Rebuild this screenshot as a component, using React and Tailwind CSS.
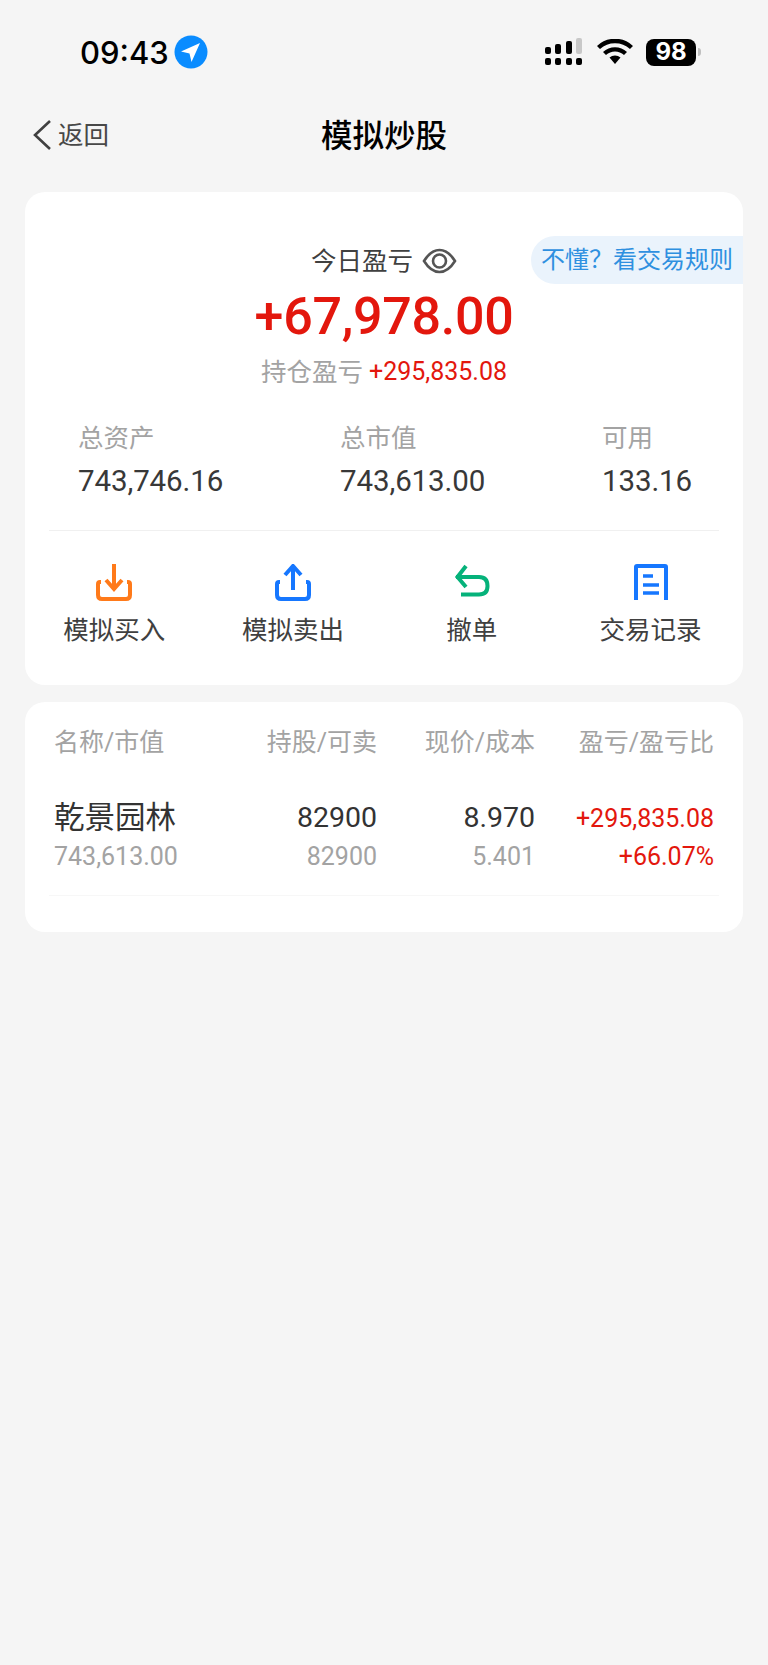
const cjk = '"Roboto","Noto Sans CJK SC",sans-serif';

function StatusBar() {
  return (
    <div className="relative flex h-[90px] items-center justify-between pt-[14px] pl-[80px] pr-[67px]">
      <div className="flex items-center gap-[5px]">
        <span className="text-[31px] leading-none font-medium text-black" style={{ fontFamily: 'Inter,sans-serif' }}>09:43</span>
        <svg width="34" height="34" viewBox="0 0 34 34">
          <circle cx="17" cy="17" r="16.5" fill="#0a8cff" />
          <path d="M26 8 L7 16.5 L15.5 18.5 L17.5 27 Z" fill="#fff" />
        </svg>
      </div>
      <div className="flex items-center">
        <svg width="42" height="28" viewBox="0 0 42 28" className="mr-[11px]">
          <rect x="1" y="9" width="6" height="7" rx="2" fill="#000" />
          <rect x="11" y="6" width="6" height="10" rx="2" fill="#000" />
          <rect x="22" y="3" width="6" height="13" rx="2" fill="#000" />
          <rect x="32" y="0" width="6" height="16" rx="2" fill="#c8c8c8" />
          <rect x="1" y="20" width="6" height="7" rx="2" fill="#000" />
          <rect x="11" y="20" width="6" height="7" rx="2" fill="#000" />
          <rect x="22" y="20" width="6" height="7" rx="2" fill="#000" />
          <rect x="32" y="20" width="6" height="7" rx="2" fill="#000" />
        </svg>
        <svg width="36" height="26" viewBox="0 0 36 26" className="mr-[13px]">
          <path d="M18 25 L12.5 18.5 A8.5 8.5 0 0 1 23.5 18.5 Z" fill="#000" />
          <path d="M7.5 14.5 A15.5 15.500 0 0 1 28.500 14.500" fill="none" stroke="#000" strokeWidth="4.4" />
          <path d="M1.500 8.500 A24 24 0 0 1 34.500 8.500" fill="none" stroke="#000" strokeWidth="4.4" />
        </svg>
        <div className="flex h-[27px] w-[50px] items-center justify-center rounded-[8px] bg-black text-[24px] leading-none font-bold text-white" style={{ fontFamily: 'Inter,sans-serif' }}>98</div>
        <div className="ml-[2px] h-[8px] w-[3px] rounded-r-full bg-[#c0c0c0]" />
      </div>
    </div>
  );
}

function NavBar() {
  return (
    <div className="relative flex h-[92px] items-center justify-center">
      <div className="absolute left-[32px] top-[29px] flex items-center">
        <svg width="20" height="32" viewBox="0 0 20 32">
          <path d="M18 2 L3 16 L18 30" fill="none" stroke="#404040" strokeWidth="2.6" />
        </svg>
        <span className="ml-[6px] mt-[1px] text-[25.500px] leading-none text-[#484848]">返回</span>
      </div>
      <span className="mt-[2px] text-[31.500px] leading-none font-medium text-black">模拟炒股</span>
    </div>
  );
}

function EyeIcon() {
  return (
    <svg width="35" height="26" viewBox="0 0 35 26" className="ml-[9px]">
      <path d="M2 13 C7 5 12 2 17.500 2 C23 2 28 5 33 13 C28 21 23 24 17.500 24 C12 24 7 21 2 13 Z" fill="none" stroke="#555" strokeWidth="2.600" />
      <circle cx="17.500" cy="13" r="6.500" fill="none" stroke="#555" strokeWidth="2.600" />
    </svg>
  );
}

function BuyIcon() {
  return (
    <svg width="36" height="37" viewBox="0 0 36 37">
      <path d="M5 18 H4 Q2 18 2 20 V31 Q2 35 6 35 H30 Q34 35 34 31 V20 Q34 18 32 18 H31" fill="none" stroke="#ff7a1a" strokeWidth="4" />
      <path d="M18 0 V24" stroke="#ff7a1a" strokeWidth="4" fill="none" />
      <path d="M10 16 L18 25 L26 16" stroke="#ff7a1a" strokeWidth="4" fill="none" />
    </svg>
  );
}

function SellIcon() {
  return (
    <svg width="36" height="37" viewBox="0 0 36 37">
      <path d="M5 18 H4 Q2 18 2 20 V31 Q2 35 6 35 H30 Q34 35 34 31 V20 Q34 18 32 18 H31" fill="none" stroke="#1677ff" strokeWidth="4" />
      <path d="M18 4 V26" stroke="#1677ff" strokeWidth="4" fill="none" />
      <path d="M10 11 L18 2 L26 11" stroke="#1677ff" strokeWidth="4" fill="none" />
    </svg>
  );
}

function RevokeIcon() {
  return (
    <svg width="36" height="37" viewBox="0 0 36 37">
      <path d="M2 13 H25 Q33.500 13 33.500 22 Q33.500 30.500 25 30.500 H7" fill="none" stroke="#05b27a" strokeWidth="4" />
      <path d="M12 2 L3.500 13 L12 23" fill="none" stroke="#05b27a" strokeWidth="4" />
    </svg>
  );
}

function RecordIcon() {
  return (
    <svg width="36" height="37" viewBox="0 0 36 37">
      <path d="M3 36 V3 Q3 2 4 2 H32 Q33 2 33 3 V36" fill="none" stroke="#1677ff" strokeWidth="4" />
      <path d="M10 12 H20 M10 21 H26 M10 29 H26" stroke="#1677ff" strokeWidth="3.500" fill="none" />
    </svg>
  );
}

function Stat({ label, value }) {
  return (
    <div>
      <div className="text-[25.500px] leading-[30px] text-[#a3a3a3]">{label}</div>
      <div className="mt-[13px] text-[29.500px] leading-[30px] tracking-[-0.1px] text-[#383838]">{value}</div>
    </div>
  );
}

function Action({ icon, label }) {
  return (
    <div className="flex flex-col items-center">
      <div className="flex h-[37px] items-center justify-center">{icon}</div>
      <div className="mt-[14px] text-[25.500px] leading-[30px] text-[#404040]">{label}</div>
    </div>
  );
}

function SummaryCard() {
  return (
    <div className="relative mx-[25px] h-[493px] overflow-hidden rounded-[20px] bg-white">
      <div className="absolute right-0 top-[44px] flex h-[48px] w-[212px] items-center rounded-l-[24px] bg-[#eaf3fc] pl-[10px] text-[24px] leading-none whitespace-nowrap text-[#2f90e0]">
        不懂？看交易规则
      </div>
      <div className="flex items-center justify-center pt-[54px]">
        <span className="text-[25.500px] leading-[30px] text-[#404040]">今日盈亏</span>
        <EyeIcon />
      </div>
      <div className="mt-[11px] text-center text-[52px] leading-[60px] font-medium tracking-[-0.3px] text-[#e3170d]">+67,978.00</div>
      <div className="mt-[9px] flex items-center justify-center leading-[32px]">
        <span className="text-[25.500px] text-[#a3a3a3]">持仓盈亏</span>
        <span className="ml-[6px] text-[25px] text-[#e3170d]">+295,835.08</span>
      </div>
      <div className="mt-[35px] grid grid-cols-[262px_262px_1fr] pl-[53px]">
        <Stat label="总资产" value="743,746.16" />
        <Stat label="总市值" value="743,613.00" />
        <Stat label="可用" value="133.16" />
      </div>
      <div className="mx-[24px] mt-[34px] h-px bg-[#f0f0f0]" />
      <div className="mt-[33px] grid grid-cols-4 pr-[3px]">
        <Action icon={<BuyIcon />} label="模拟买入" />
        <Action icon={<SellIcon />} label="模拟卖出" />
        <Action icon={<RevokeIcon />} label="撤单" />
        <Action icon={<RecordIcon />} label="交易记录" />
      </div>
    </div>
  );
}

function HoldingsCard() {
  const grid = 'grid grid-cols-[200px_123px_158px_179px] px-[29px]';
  return (
    <div className="mx-[25px] mt-[17px] h-[230px] rounded-[20px] bg-white">
      <div className={`${grid} pt-[26px] text-[25px] leading-[30px] text-[#a3a3a3]`}>
        <div>名称/市值</div>
        <div className="text-right whitespace-nowrap">持股/可卖</div>
        <div className="text-right whitespace-nowrap">现价/成本</div>
        <div className="text-right whitespace-nowrap">盈亏/盈亏比</div>
      </div>
      <div className={`${grid} pt-[42px]`}>
        <div className="whitespace-nowrap">
          <div className="text-[30.500px] leading-[36px] text-[#333]">乾景园林</div>
          <div className="mt-[6px] text-[25px] leading-[30px] text-[#a3a3a3]">743,613.00</div>
        </div>
        <div className="text-right">
          <div className="text-[28.500px] leading-[36px] text-[#333]">82900</div>
          <div className="mt-[6px] text-[25px] leading-[30px] text-[#a3a3a3]">82900</div>
        </div>
        <div className="text-right">
          <div className="text-[28.500px] leading-[36px] text-[#333]">8.970</div>
          <div className="mt-[6px] text-[25px] leading-[30px] text-[#a3a3a3]">5.401</div>
        </div>
        <div className="text-right text-[25px] text-[#e3170d]">
          <div className="pt-[2px] leading-[34px]">+295,835.08</div>
          <div className="mt-[6px] leading-[30px]">+66.07%</div>
        </div>
      </div>
      <div className="mx-[24px] mt-[23px] h-px bg-[#f7f7f7]" />
    </div>
  );
}

export default function App() {
  return (
    <div className="min-h-[1665px] bg-[#f5f5f5]" style={{ fontFamily: cjk }}>
      <StatusBar />
      <NavBar />
      <div className="mt-[10px]">
        <SummaryCard />
        <HoldingsCard />
      </div>
    </div>
  );
}
